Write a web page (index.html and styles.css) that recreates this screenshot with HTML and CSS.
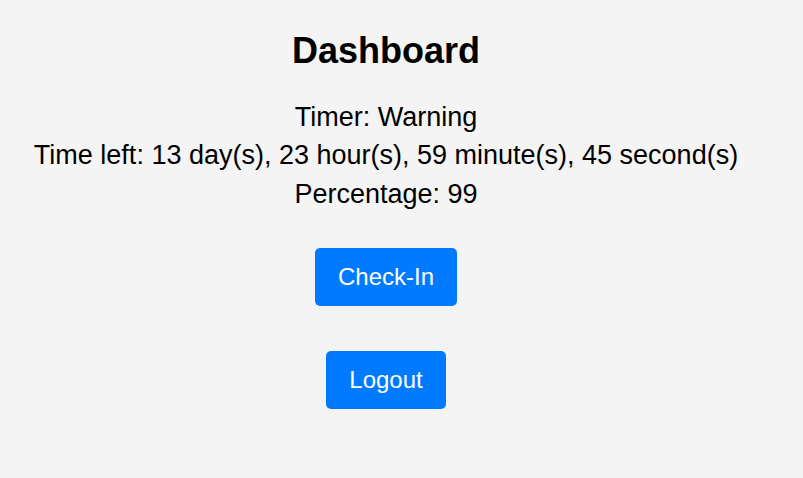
FILE: index.html
```html
<!DOCTYPE html>
<html>
<head>
<meta charset="utf-8">
<link rel="stylesheet" href="styles.css">
</head>
<body>
<div class="page">
  <h1 class="title">Dashboard</h1>
  <div class="info">
    <p class="line">Timer: Warning</p>
    <p class="line">Time left: 13 day(s), 23 hour(s), 59 minute(s), 45 second(s)</p>
    <p class="line">Percentage: 99</p>
  </div>
  <div class="actions">
    <button class="btn">Check-In</button>
    <button class="btn">Logout</button>
  </div>
</div>
</body>
</html>
```
FILE: styles.css
```css
html, body {
  margin: 0;
  padding: 0;
  background: #f4f4f4;
}
body {
  font-family: "Liberation Sans", Arial, sans-serif;
  color: #000;
}
.page {
  width: 772px;
  display: flex;
  flex-direction: column;
  align-items: center;
  text-align: center;
  padding-top: 29.5px;
}
.title {
  margin: 0;
  font-size: 36px;
  line-height: 42px;
  font-weight: bold;
}
.info {
  margin-top: 26px;
}
.line {
  margin: 0;
  font-size: 27px;
  line-height: 38.5px;
  white-space: nowrap;
}
.actions {
  margin-top: 35px;
  display: flex;
  flex-direction: column;
  align-items: center;
  gap: 45px;
}
.btn {
  height: 58px;
  padding: 0 23px;
  border: none;
  border-radius: 5px;
  background: #007bff;
  color: #fff;
  font-family: "Liberation Sans", Arial, sans-serif;
  font-size: 24px;
  cursor: pointer;
}
```
